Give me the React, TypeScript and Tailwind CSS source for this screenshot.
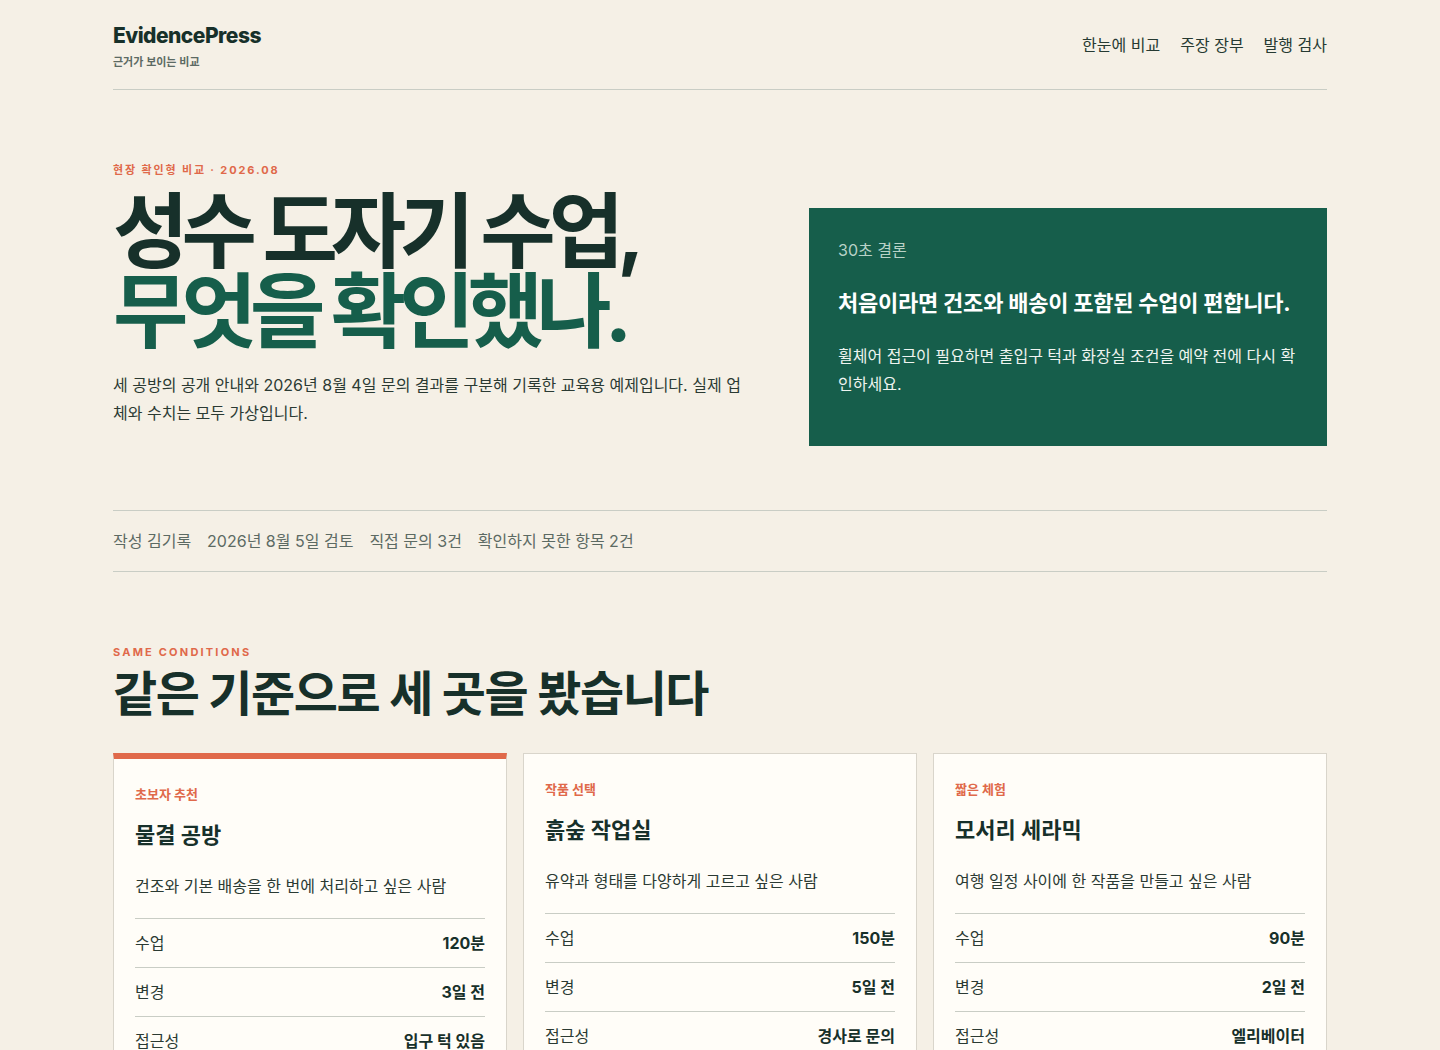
import React from "react";

const FONT = {
  fontFamily: 'Inter, "Noto Sans CJK KR", "Noto Sans", sans-serif',
};

interface Option {
  tag: string;
  name: string;
  fit: string;
  rows: [string, string][];
  featured?: boolean;
}

const options: Option[] = [
  {
    tag: "초보자 추천",
    name: "물결 공방",
    fit: "건조와 기본 배송을 한 번에 처리하고 싶은 사람",
    rows: [
      ["수업", "120분"],
      ["변경", "3일 전"],
      ["접근성", "입구 턱 있음"],
    ],
    featured: true,
  },
  {
    tag: "작품 선택",
    name: "흙숲 작업실",
    fit: "유약과 형태를 다양하게 고르고 싶은 사람",
    rows: [
      ["수업", "150분"],
      ["변경", "5일 전"],
      ["접근성", "경사로 문의"],
    ],
  },
  {
    tag: "짧은 체험",
    name: "모서리 세라믹",
    fit: "여행 일정 사이에 한 작품을 만들고 싶은 사람",
    rows: [
      ["수업", "90분"],
      ["변경", "2일 전"],
      ["접근성", "엘리베이터"],
    ],
  },
];

function Header() {
  return (
    <header className="flex items-center justify-between border-b border-[#c9cdc5] pt-[22px] pb-[19px]">
      <div>
        <div className="text-[21px] font-extrabold leading-[28px] tracking-[-0.025em] text-[#17302a]">
          EvidencePress
        </div>
        <div className="mt-[4px] text-[11px] font-semibold leading-[16px] text-[#5c6a63]">
          근거가 보이는 비교
        </div>
      </div>
      <nav className="-mt-[3px] flex items-center gap-[20px] text-[16px] text-[#263a32]">
        <a>한눈에 비교</a>
        <a>주장 장부</a>
        <a>발행 검사</a>
      </nav>
    </header>
  );
}

function Hero() {
  return (
    <section className="grid grid-cols-[640px_518px] gap-[56px] items-start pt-[72px]">
      <div>
        <p className="text-[11px] font-bold leading-[16px] tracking-[0.17em] text-[#e0694a]">
          현장 확인형 비교 · 2026.08
        </p>
        <h1 className="mt-[14px] text-[82px] font-bold leading-[80px] tracking-[-0.085em] text-[#17302a]">
          성수 도자기 수업,
          <br />
          <span className="text-[#165e4b]">무엇을 확인했나.</span>
        </h1>
        <p className="mt-[19px] text-[16px] leading-[28px] text-[#2b3a33]">
          세 공방의 공개 안내와 2026년 8월 4일 문의 결과를 구분해 기록한 교육용 예제입니다. 실제 업체와 수치는 모두 가상입니다.
        </p>
      </div>
      <aside className="mt-[46px] bg-[#165e4b] px-[29px] pt-[30px] pb-[48px] text-white">
        <p className="text-[16px] leading-[24px] text-[#b9d2c7]">30초 결론</p>
        <p className="mt-[26px] text-[22px] font-bold leading-[30px] tracking-[-0.01em]">
          처음이라면 건조와 배송이 포함된 수업이 편합니다.
        </p>
        <p className="mt-[24px] text-[16px] leading-[28px] text-[#eef4f0]">
          휠체어 접근이 필요하면 출입구 턱과 화장실 조건을 예약 전에 다시 확인하세요.
        </p>
      </aside>
    </section>
  );
}

function Meta() {
  return (
    <div className="mt-[64px] flex gap-[16px] border-y border-[#c9cdc5] py-[18px] text-[16px] leading-[24px] text-[#5c6a63]">
      <span>작성 김기록</span>
      <span>2026년 8월 5일 검토</span>
      <span>직접 문의 3건</span>
      <span>확인하지 못한 항목 2건</span>
    </div>
  );
}

function OptionCard({ option }: { option: Option }) {
  return (
    <article
      className={
        option.featured
          ? "border border-t-[6px] border-[#d9d5cb] border-t-[#e0694a] bg-[#fffdf8] px-[21px] pt-[25px]"
          : "border border-[#d9d5cb] bg-[#fffdf8] px-[21px] pt-[25px]"
      }
    >
      <p className="text-[13px] font-bold leading-[20px] text-[#e0694a]">{option.tag}</p>
      <h3 className="mt-[16px] text-[22px] font-bold leading-[30px] text-[#17302a]">
        {option.name}
      </h3>
      <p className="mt-[24px] text-[16px] leading-[24px] text-[#2b3a33]">{option.fit}</p>
      <dl className="mt-[20px]">
        {option.rows.map(([k, v]) => (
          <div
            key={k}
            className="flex items-center justify-between border-t border-[#c9cdc5] h-[49px] text-[16px]"
          >
            <dt className="text-[#2b3a33]">{k}</dt>
            <dd className="font-bold text-[#17302a]">{v}</dd>
          </div>
        ))}
      </dl>
    </article>
  );
}

function Conditions() {
  return (
    <section className="pt-[72px] pb-[60px]">
      <p className="text-[11px] font-bold leading-[16px] tracking-[0.2em] text-[#e0694a]">
        SAME CONDITIONS
      </p>
      <h2 className="mt-[5px] text-[48px] font-bold leading-[58px] tracking-[-0.03em] text-[#17302a]">
        같은 기준으로 세 곳을 봤습니다
      </h2>
      <div className="mt-[30px] grid grid-cols-3 gap-[16px] items-start">
        {options.map((o) => (
          <OptionCard key={o.name} option={o} />
        ))}
      </div>
    </section>
  );
}

export default function App() {
  return (
    <div className="min-h-screen bg-[#f5f0e6]" style={FONT}>
      <div className="mx-auto w-[1214px]">
        <Header />
        <Hero />
        <Meta />
        <Conditions />
      </div>
    </div>
  );
}
